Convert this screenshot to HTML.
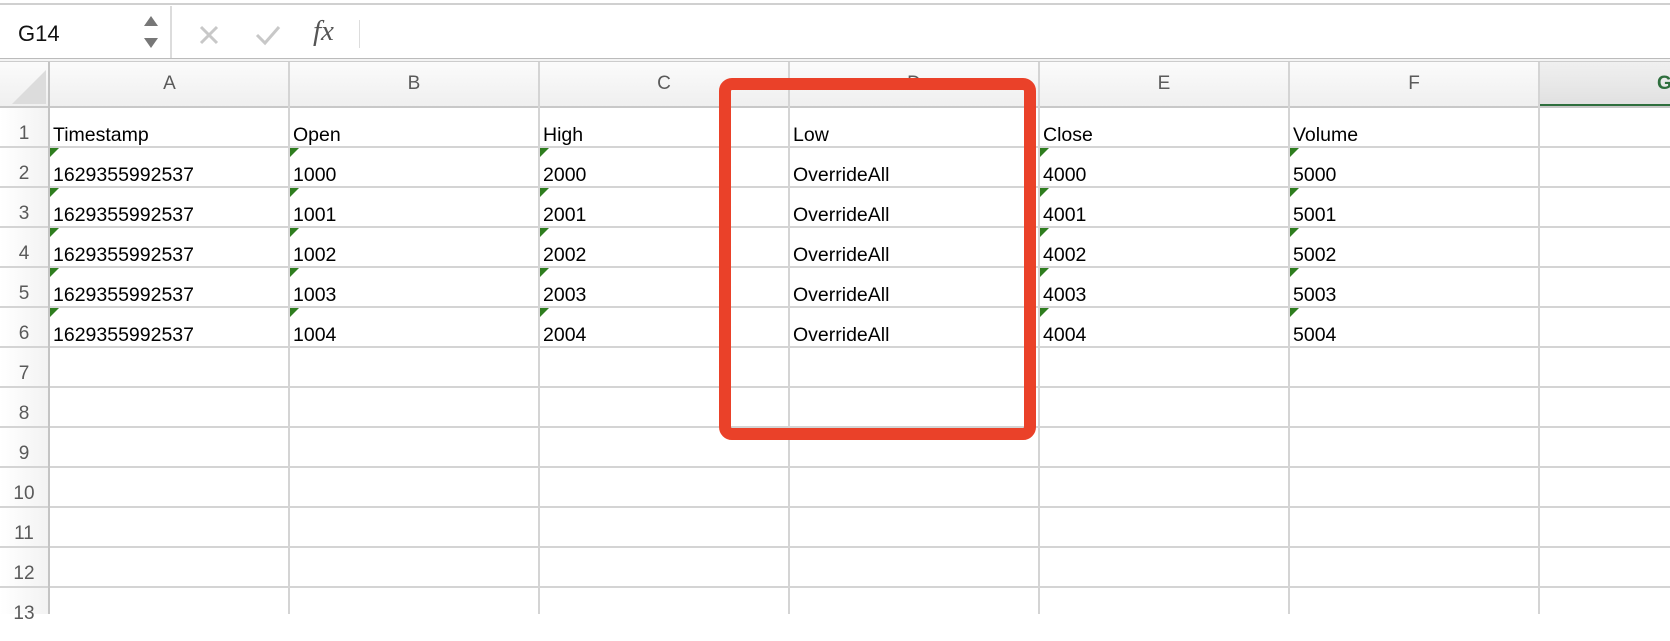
<!DOCTYPE html>
<html><head><meta charset="utf-8"><style>
*{margin:0;padding:0;box-sizing:border-box}
body{width:1670px;height:614px;overflow:hidden;background:#fff;font-family:"Liberation Sans",Arial,sans-serif;position:relative}
.a{position:absolute}
.hl{position:absolute;left:0;width:1670px;height:2px;background:#d4d4d4}
.vl{position:absolute;top:62px;width:2px;height:552px;background:#d4d4d4}
.ch{position:absolute;top:62px;height:45px;line-height:44px;text-align:center;color:#5a5a5a;font-size:19px}
.rn{position:absolute;left:0;width:48px;text-align:center;color:#5a5a5a;font-size:19px;height:40px;line-height:54px}
.c{position:absolute;font-size:19.5px;color:#000;height:40px;line-height:56px;padding-left:3px;white-space:nowrap}
.t{position:absolute;width:0;height:0;border-top:9px solid #2e7d1f;border-right:9px solid transparent}
</style></head><body>
<div class="a" style="left:0;top:3px;width:1670px;height:2px;background:#d0d0d0"></div>
<div class="a" style="left:18px;top:21px;font-size:22px;color:#111">G14</div>
<svg class="a" style="left:142px;top:14px" width="18" height="36"><path d="M2 12 L9 2 L16 12Z M2 24 L9 34 L16 24Z" fill="#777"/></svg>
<div class="a" style="left:170px;top:6px;width:2px;height:53px;background:#dcdcdc"></div>
<svg class="a" style="left:198px;top:24px" width="22" height="22"><path d="M3 3 L19 19 M19 3 L3 19" stroke="#c8c8c8" stroke-width="3"/></svg>
<svg class="a" style="left:254px;top:24px" width="28" height="22"><path d="M3 11 L11 19 L25 3" stroke="#c8c8c8" stroke-width="3" fill="none"/></svg>
<div class="a" style="left:313px;top:15px;font-family:'Liberation Serif',serif;font-style:italic;font-size:29px;color:#555">fx</div>
<div class="a" style="left:359px;top:20px;width:1px;height:28px;background:#ddd"></div>
<div class="a" style="left:0;top:58px;width:1670px;height:4px;border-top:1px solid #bbb;border-bottom:1px solid #ccc;background:#f4f4f4"></div>
<div class="a" style="left:0;top:62px;width:1670px;height:45px;background:linear-gradient(#fbfbfb,#efefef)"></div>
<div class="a" style="left:1539px;top:62px;width:131px;height:45px;background:linear-gradient(#f0f0f0,#e0e0e0)"></div>
<div class="a" style="left:1539px;top:104px;width:131px;height:4px;background:#2f6f3e"></div>
<svg class="a" style="left:12px;top:70px" width="34" height="34"><path d="M34 0 L34 34 L0 34Z" fill="#dcdcdc"/></svg>
<div class="a" style="left:0;top:107px;width:48px;height:507px;background:linear-gradient(90deg,#fff,#f3f3f3)"></div>
<div class="ch" style="left:50px;width:239px">A</div>
<div class="ch" style="left:289px;width:250px">B</div>
<div class="ch" style="left:539px;width:250px">C</div>
<div class="ch" style="left:789px;width:250px">D</div>
<div class="ch" style="left:1039px;width:250px">E</div>
<div class="ch" style="left:1289px;width:250px">F</div>
<div class="ch" style="left:1539px;width:250px;text-align:left;padding-left:118px;color:#2f6f3e;font-weight:bold">G</div>
<div class="hl" style="top:106px;background:#c8c8c8"></div>
<div class="hl" style="top:146px"></div><div class="hl" style="top:186px"></div><div class="hl" style="top:226px"></div>
<div class="hl" style="top:266px"></div><div class="hl" style="top:306px"></div><div class="hl" style="top:346px"></div>
<div class="hl" style="top:386px"></div><div class="hl" style="top:426px"></div><div class="hl" style="top:466px"></div>
<div class="hl" style="top:506px"></div><div class="hl" style="top:546px"></div><div class="hl" style="top:586px"></div>
<div class="vl" style="left:48px;background:#c4c4c4"></div>
<div class="vl" style="left:288px"></div><div class="vl" style="left:538px"></div><div class="vl" style="left:788px"></div>
<div class="vl" style="left:1038px"></div><div class="vl" style="left:1288px"></div><div class="vl" style="left:1538px"></div>
<div class="rn" style="top:107px">1</div><div class="rn" style="top:147px">2</div><div class="rn" style="top:187px">3</div>
<div class="rn" style="top:227px">4</div><div class="rn" style="top:267px">5</div><div class="rn" style="top:307px">6</div>
<div class="rn" style="top:347px">7</div><div class="rn" style="top:387px">8</div><div class="rn" style="top:427px">9</div>
<div class="rn" style="top:467px">10</div><div class="rn" style="top:507px">11</div><div class="rn" style="top:547px">12</div>
<div class="rn" style="top:587px">13</div>
<div class="c" style="left:50px;top:107px">Timestamp</div><div class="c" style="left:290px;top:107px">Open</div><div class="c" style="left:540px;top:107px">High</div><div class="c" style="left:790px;top:107px">Low</div><div class="c" style="left:1040px;top:107px">Close</div><div class="c" style="left:1290px;top:107px">Volume</div>
<div class="c" style="left:50px;top:147px">1629355992537</div><div class="c" style="left:290px;top:147px">1000</div><div class="c" style="left:540px;top:147px">2000</div><div class="c" style="left:790px;top:147px">OverrideAll</div><div class="c" style="left:1040px;top:147px">4000</div><div class="c" style="left:1290px;top:147px">5000</div>
<div class="c" style="left:50px;top:187px">1629355992537</div><div class="c" style="left:290px;top:187px">1001</div><div class="c" style="left:540px;top:187px">2001</div><div class="c" style="left:790px;top:187px">OverrideAll</div><div class="c" style="left:1040px;top:187px">4001</div><div class="c" style="left:1290px;top:187px">5001</div>
<div class="c" style="left:50px;top:227px">1629355992537</div><div class="c" style="left:290px;top:227px">1002</div><div class="c" style="left:540px;top:227px">2002</div><div class="c" style="left:790px;top:227px">OverrideAll</div><div class="c" style="left:1040px;top:227px">4002</div><div class="c" style="left:1290px;top:227px">5002</div>
<div class="c" style="left:50px;top:267px">1629355992537</div><div class="c" style="left:290px;top:267px">1003</div><div class="c" style="left:540px;top:267px">2003</div><div class="c" style="left:790px;top:267px">OverrideAll</div><div class="c" style="left:1040px;top:267px">4003</div><div class="c" style="left:1290px;top:267px">5003</div>
<div class="c" style="left:50px;top:307px">1629355992537</div><div class="c" style="left:290px;top:307px">1004</div><div class="c" style="left:540px;top:307px">2004</div><div class="c" style="left:790px;top:307px">OverrideAll</div><div class="c" style="left:1040px;top:307px">4004</div><div class="c" style="left:1290px;top:307px">5004</div>
<div class="t" style="left:50px;top:148px"></div><div class="t" style="left:290px;top:148px"></div><div class="t" style="left:540px;top:148px"></div><div class="t" style="left:1040px;top:148px"></div><div class="t" style="left:1290px;top:148px"></div>
<div class="t" style="left:50px;top:188px"></div><div class="t" style="left:290px;top:188px"></div><div class="t" style="left:540px;top:188px"></div><div class="t" style="left:1040px;top:188px"></div><div class="t" style="left:1290px;top:188px"></div>
<div class="t" style="left:50px;top:228px"></div><div class="t" style="left:290px;top:228px"></div><div class="t" style="left:540px;top:228px"></div><div class="t" style="left:1040px;top:228px"></div><div class="t" style="left:1290px;top:228px"></div>
<div class="t" style="left:50px;top:268px"></div><div class="t" style="left:290px;top:268px"></div><div class="t" style="left:540px;top:268px"></div><div class="t" style="left:1040px;top:268px"></div><div class="t" style="left:1290px;top:268px"></div>
<div class="t" style="left:50px;top:308px"></div><div class="t" style="left:290px;top:308px"></div><div class="t" style="left:540px;top:308px"></div><div class="t" style="left:1040px;top:308px"></div><div class="t" style="left:1290px;top:308px"></div>
<div class="a" style="left:719px;top:78px;width:317px;height:362px;border:12px solid #ea4129;border-radius:13px"></div>
</body></html>
